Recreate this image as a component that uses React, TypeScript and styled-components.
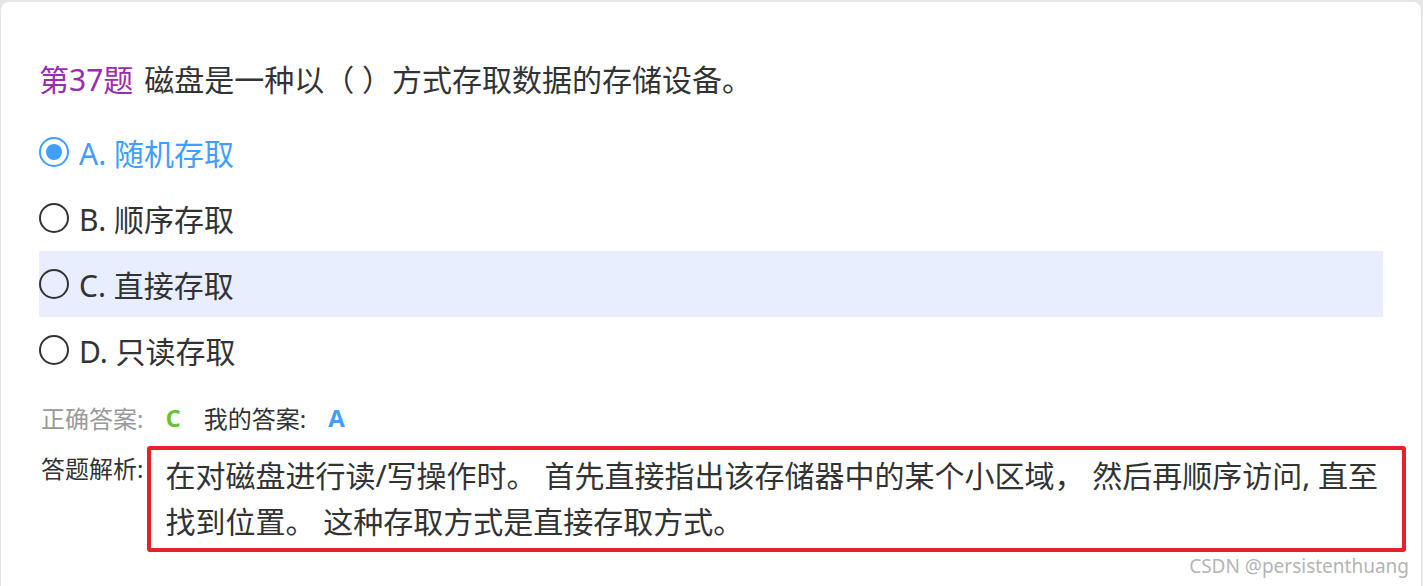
import styled, { createGlobalStyle } from 'styled-components';

const GlobalStyle = createGlobalStyle`
  html, body {
    margin: 0;
    padding: 0;
    background: #e6e6e6;
  }
  body {
    font-family: "Noto Sans", "Noto Sans CJK SC", sans-serif;
    color: #333;
  }
`;

type Option = {
  key: string;
  text: string;
};

const OPTIONS: Option[] = [
  { key: 'A', text: '随机存取' },
  { key: 'B', text: '顺序存取' },
  { key: 'C', text: '直接存取' },
  { key: 'D', text: '只读存取' },
];

const SELECTED = 'A';
const HOVERED = 'C';

function Radio({ checked }: { checked: boolean }) {
  return (
    <StyledRadio $checked={checked}>{checked && <StyledDot />}</StyledRadio>
  );
}

function App() {
  return (
    <>
      <GlobalStyle />
      <StyledCard>
        <StyledTitle>
          <StyledNumber>第37题</StyledNumber> 磁盘是一种以（ ）方式存取数据的存储设备。
        </StyledTitle>

        <StyledOptions>
          {OPTIONS.map((option) => (
            <StyledOption
              key={option.key}
              $active={option.key === SELECTED}
              $hovered={option.key === HOVERED}
            >
              <Radio checked={option.key === SELECTED} />
              <span>
                {option.key}. {option.text}
              </span>
            </StyledOption>
          ))}
        </StyledOptions>

        <StyledAnswers>
          <StyledLabel $muted>正确答案:</StyledLabel>
          <StyledValue $color="#67c23a">C</StyledValue>
          <StyledLabel>我的答案:</StyledLabel>
          <StyledValue $color="#409eff">A</StyledValue>
        </StyledAnswers>

        <StyledAnalysis>
          <StyledAnalysisLabel>答题解析:</StyledAnalysisLabel>
          <StyledAnalysisBox>
            在对磁盘进行读/写操作时。 首先直接指出该存储器中的某个小区域， 然后再顺序访问, 直至找到位置。 这种存取方式是直接存取方式。
          </StyledAnalysisBox>
        </StyledAnalysis>

        <StyledWatermark>CSDN @persistenthuang</StyledWatermark>
      </StyledCard>
    </>
  );
}

const StyledCard = styled.div`
  position: relative;
  box-sizing: border-box;
  height: 584px;
  margin: 2px 2px 0 1px;
  padding: 45px 38px 0 38px;
  background: #fff;
  border-radius: 8px 8px 0 0;
`;

const StyledTitle = styled.div`
  font-size: 30px;
  line-height: 66px;
  color: #333;
  margin-bottom: 6px;
`;

const StyledNumber = styled.span`
  color: #9c2bb0;
  margin-right: 3px;
`;

const StyledOptions = styled.div`
  display: flex;
  flex-direction: column;
`;

const StyledOption = styled.div<{ $active: boolean; $hovered: boolean }>`
  display: flex;
  align-items: center;
  gap: 10px;
  height: 66px;
  font-size: 30px;
  color: ${({ $active }) => ($active ? '#409eff' : '#333')};
  background: ${({ $hovered }) => ($hovered ? '#e8eefe' : 'transparent')};
`;

const StyledRadio = styled.span<{ $checked: boolean }>`
  box-sizing: border-box;
  display: flex;
  align-items: center;
  justify-content: center;
  width: 30px;
  height: 30px;
  border-radius: 50%;
  border: 2.5px solid ${({ $checked }) => ($checked ? '#409eff' : '#333')};
`;

const StyledDot = styled.span`
  width: 16px;
  height: 16px;
  border-radius: 50%;
  background: #409eff;
`;

const StyledAnswers = styled.div`
  display: flex;
  align-items: center;
  height: 40px;
  margin-top: 14px;
  padding-left: 2px;
  font-size: 24px;
`;

const StyledLabel = styled.span<{ $muted?: boolean }>`
  color: ${({ $muted }) => ($muted ? '#999' : '#333')};
`;

const StyledValue = styled.span<{ $color: string }>`
  color: ${({ $color }) => $color};
  font-family: "Open Sans", "Noto Sans", sans-serif;
  font-weight: 700;
  margin: 0 23px 0 22px;
`;

const StyledAnalysis = styled.div`
  display: flex;
  align-items: flex-start;
  gap: 4px;
  margin-top: 9px;
  margin-right: -23px;
  padding-left: 2px;
`;

const StyledAnalysisLabel = styled.span`
  flex-shrink: 0;
  font-size: 24px;
  line-height: 46px;
  color: #333;
`;

const StyledAnalysisBox = styled.div`
  flex: 1;
  border: 4px solid #e8202a;
  border-radius: 3px;
  padding: 3px 14px;
  font-size: 30px;
  line-height: 46px;
  color: #333;
`;

const StyledWatermark = styled.div`
  position: absolute;
  right: 12px;
  bottom: 7px;
  font-size: 19px;
  color: #b4b4b4;
`;

export default App;
